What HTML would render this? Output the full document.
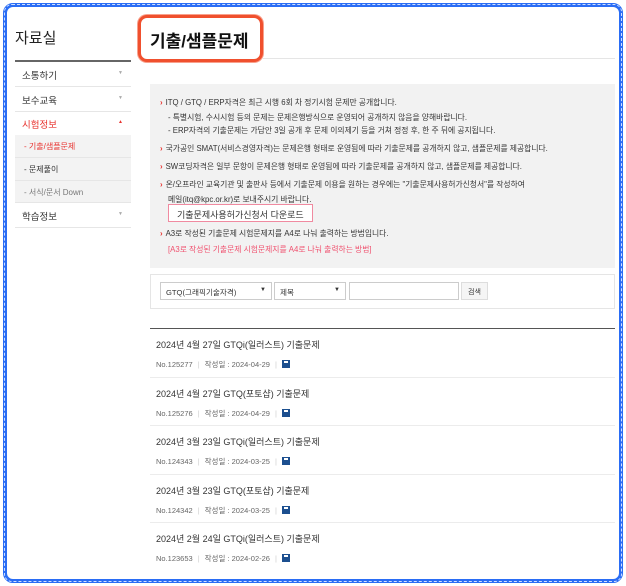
<!DOCTYPE html>
<html><head><meta charset="utf-8"><style>
*{margin:0;padding:0;box-sizing:border-box}
body{width:626px;height:586px;background:#fff;font-family:"Liberation Sans","Noto Sans CJK KR",sans-serif;position:relative;overflow:hidden;color:#333}
.frame{position:absolute;left:3px;top:3px;width:620px;height:580px;border:4px solid #2a6df5;border-radius:10px}
.frame:after{content:"";position:absolute;left:-3px;top:-3px;right:-3px;bottom:-3px;border:1px dashed #cfe0ff;border-radius:8px}
.a{position:absolute;white-space:nowrap}
.mi{position:absolute;left:15px;width:116px;height:25px;border-bottom:1px solid #e6e6e6;font-size:9.5px;color:#333;padding:6px 0 0 7px}
.mi .ar{position:absolute;right:8px;top:8px;font-size:5px;color:#aaa}
.sub{background:#f3f3f3;font-size:8px;padding-left:9px}
.info{left:150px;top:84px;width:465px;height:184px;background:#f2f2f2}
.info div{position:absolute;font-size:7.8px;color:#333;white-space:nowrap}
.gt{color:#e8322e;font-weight:bold;margin-right:3px}
.it{position:absolute;left:150px;width:465px;height:48.5px;border-bottom:1px solid #ececec}
.it .t{position:absolute;left:6px;top:9px;font-size:9px;color:#333}
.it .m{position:absolute;left:6px;top:30px;font-size:7.5px;color:#666}
.m .s{color:#ccc;margin:0 5px}
.fl{display:inline-block;width:8px;height:8px;background:#1c4f8f;vertical-align:-1px;position:relative}
.fl:after{content:"";position:absolute;left:2px;top:1px;width:4px;height:2px;background:#fff}
</style></head><body>
<div class="frame"></div>
<div class="a" style="left:15px;top:27px;font-size:15px;color:#222">자료실</div>
<div class="a" style="left:15px;top:60px;width:116px;height:2px;background:#666"></div>
<div class="mi" style="top:62px">소통하기<span class="ar">▼</span></div>
<div class="mi" style="top:87px">보수교육<span class="ar">▼</span></div>
<div class="mi" style="top:111px;color:#e8322e">시험정보<span class="ar" style="color:#e8322e">▲</span></div>
<div class="mi sub" style="top:135px;height:23px;color:#e8322e">- 기출/샘플문제</div>
<div class="mi sub" style="top:158px;height:23px">- 문제풀이</div>
<div class="mi sub" style="top:181px;height:22px;color:#777">- 서식/문서 Down</div>
<div class="mi" style="top:203px">학습정보<span class="ar">▼</span></div>

<div class="a" style="left:263px;top:58px;width:352px;height:1px;background:#e5e5e5"></div>
<div class="a" style="left:138px;top:15px;width:125px;height:47px;border:3px solid #f0502e;border-radius:9px;background:#fff;box-shadow:0 0 0 1px #f8a08c"></div>
<div class="a" style="left:150px;top:27px;font-size:17px;font-weight:bold;color:#111">기출/샘플문제</div>

<div class="a info">
<div style="left:10px;top:13px"><span class="gt">›</span>ITQ / GTQ / ERP자격은 최근 시행 6회 차 정기시험 문제만 공개합니다.</div>
<div style="left:18px;top:28px">- 특별시험, 수시시험 등의 문제는 문제은행방식으로 운영되어 공개하지 않음을 양해바랍니다.</div>
<div style="left:18px;top:41px">- ERP자격의 기출문제는 가답안 3일 공개 후 문제 이의제기 등을 거쳐 정정 후, 한 주 뒤에 공지됩니다.</div>
<div style="left:10px;top:59px"><span class="gt">›</span>국가공인 SMAT(서비스경영자격)는 문제은행 형태로 운영됨에 따라 기출문제를 공개하지 않고, 샘플문제를 제공합니다.</div>
<div style="left:10px;top:77px"><span class="gt">›</span>SW코딩자격은 일부 문항이 문제은행 형태로 운영됨에 따라 기출문제를 공개하지 않고, 샘플문제를 제공합니다.</div>
<div style="left:10px;top:95px"><span class="gt">›</span>온/오프라인 교육기관 및 출판사 등에서 기출문제 이용을 원하는 경우에는 "기출문제사용허가신청서"를 작성하여</div>
<div style="left:18px;top:110px">메일(itq@kpc.or.kr)로 보내주시기 바랍니다.</div>
<div style="left:18px;top:120px;width:145px;height:18px;border:1px solid #f08aa0;background:#fff;font-size:9px;padding:3px 0 0 8px">기출문제사용허가신청서 다운로드</div>
<div style="left:10px;top:144px"><span class="gt">›</span>A3로 작성된 기출문제 시험문제지를 A4로 나눠 출력하는 방법입니다.</div>
<div style="left:18px;top:160px;color:#f0506e">[A3로 작성된 기출문제 시험문제지를 A4로 나눠 출력하는 방법]</div>
</div>

<div class="a" style="left:150px;top:274px;width:465px;height:35px;border:1px solid #e5e5e5"></div>
<div class="a" style="left:160px;top:282px;width:112px;height:18px;border:1px solid #ccc;font-size:7.6px;padding:4px 0 0 5px">GTQ(그래픽기술자격)<span style="position:absolute;right:5px;font-size:6px">▼</span></div>
<div class="a" style="left:274px;top:282px;width:72px;height:18px;border:1px solid #ccc;font-size:7.6px;padding:4px 0 0 5px">제목<span style="position:absolute;right:5px;font-size:6px">▼</span></div>
<div class="a" style="left:349px;top:282px;width:110px;height:18px;border:1px solid #ccc"></div>
<div class="a" style="left:461px;top:282px;width:27px;height:18px;border:1px solid #ddd;background:#f5f5f5;font-size:7px;padding:4px 0 0 6px">검색</div>

<div class="a" style="left:150px;top:328px;width:465px;height:1px;background:#555"></div>
<div class="it" style="top:329px"><div class="t">2024년 4월 27일 GTQi(일러스트) 기출문제</div><div class="m">No.125277<span class="s">|</span>작성일 : 2024-04-29<span class="s">|</span><span class="fl"></span></div></div>
<div class="it" style="top:377.5px"><div class="t">2024년 4월 27일 GTQ(포토샵) 기출문제</div><div class="m">No.125276<span class="s">|</span>작성일 : 2024-04-29<span class="s">|</span><span class="fl"></span></div></div>
<div class="it" style="top:426px"><div class="t">2024년 3월 23일 GTQi(일러스트) 기출문제</div><div class="m">No.124343<span class="s">|</span>작성일 : 2024-03-25<span class="s">|</span><span class="fl"></span></div></div>
<div class="it" style="top:474.5px"><div class="t">2024년 3월 23일 GTQ(포토샵) 기출문제</div><div class="m">No.124342<span class="s">|</span>작성일 : 2024-03-25<span class="s">|</span><span class="fl"></span></div></div>
<div class="it" style="top:523px;border:none"><div class="t">2024년 2월 24일 GTQi(일러스트) 기출문제</div><div class="m">No.123653<span class="s">|</span>작성일 : 2024-02-26<span class="s">|</span><span class="fl"></span></div></div>
</body></html>
